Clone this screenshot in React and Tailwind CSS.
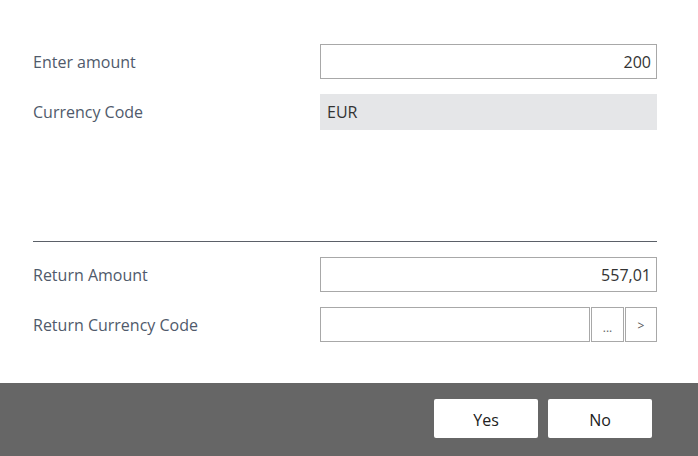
import React from "react";

function Label({ children }) {
  return (
    <div className="w-[287px] shrink-0 text-[16px] text-[#505a6b]">{children}</div>
  );
}

export default function App() {
  return (
    <div className="w-[698px] h-[456px] flex flex-col bg-white font-['Open_Sans',sans-serif]">
      <div className="flex-1 pl-[33px] pr-[41px] pt-[44px]">
        <div className="flex items-center h-[35px]">
          <Label>Enter amount</Label>
          <div className="flex-1 h-full border border-[#a8a8a8] flex items-center justify-end pr-[5px] text-[16px] text-[#333]">
            200
          </div>
        </div>
        <div className="flex items-center h-[36px] mt-[15px]">
          <Label>Currency Code</Label>
          <div className="flex-1 h-full bg-[#e5e6e8] flex items-center pl-[7px] text-[16px] text-[#333]">
            EUR
          </div>
        </div>
        <div className="mt-[111px] h-px bg-[#5b6068]" />
        <div className="flex items-center h-[35px] mt-[15px]">
          <Label>Return Amount</Label>
          <div className="flex-1 h-full border border-[#a8a8a8] flex items-center justify-end pr-[5px] text-[16px] text-[#333]">
            557,01
          </div>
        </div>
        <div className="flex items-center h-[35px] mt-[15px]">
          <Label>Return Currency Code</Label>
          <div className="flex-1 h-full flex gap-[1px]">
            <div className="flex-1 border border-[#a8a8a8]" />
            <div className="w-[33px] border border-[#a8a8a8] flex items-end justify-center pb-[7px] text-[12px] text-[#666] leading-none">
              ...
            </div>
            <div className="w-[32px] border border-[#a8a8a8] flex items-center justify-center pt-[2px] text-[12px] text-[#555] leading-none">
              &gt;
            </div>
          </div>
        </div>
      </div>
      <div className="h-[73px] bg-[#666666] flex justify-end items-start pt-[16px] pr-[46px] gap-[10px]">
        <button className="w-[104px] h-[39px] pt-[3px] bg-white rounded-[2px] text-[16px] font-medium text-[#212121]">Yes</button>
        <button className="w-[104px] h-[39px] pt-[3px] bg-white rounded-[2px] text-[16px] font-medium text-[#212121]">No</button>
      </div>
    </div>
  );
}
